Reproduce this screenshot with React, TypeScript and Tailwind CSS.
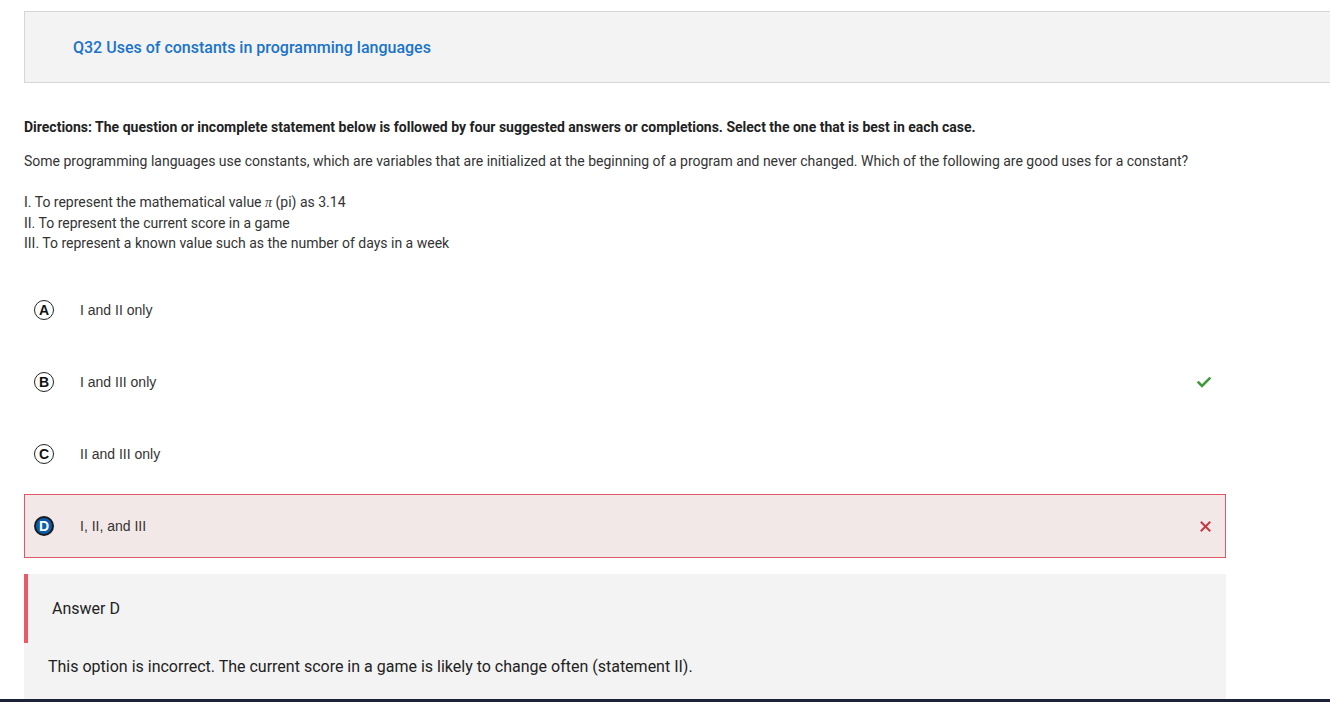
import React from 'react';

type Option = {
  letter: string;
  text: string;
  mark?: 'correct' | 'wrong';
  selected?: boolean;
};

const options: Option[] = [
  { letter: 'A', text: 'I and II only' },
  { letter: 'B', text: 'I and III only', mark: 'correct' },
  { letter: 'C', text: 'II and III only' },
  { letter: 'D', text: 'I, II, and III', mark: 'wrong', selected: true },
];

const CheckIcon = () => (
  <svg width="14" height="11" viewBox="0 0 14 11" fill="none">
    <path d="M1.5 5.5 L5 9 L12.5 1.5" stroke="#3f9b3a" strokeWidth="2.6" strokeLinecap="square" />
  </svg>
);

const CrossIcon = () => (
  <svg width="11" height="11" viewBox="0 0 11 11" fill="none">
    <path d="M1.5 1.5 L9.5 9.5 M9.5 1.5 L1.5 9.5" stroke="#c23a44" strokeWidth="2" strokeLinecap="square" />
  </svg>
);

const LetterBadge = ({ letter, selected }: { letter: string; selected?: boolean }) => (
  <div
    className={
      selected
        ? 'flex h-[20px] w-[20px] items-center justify-center rounded-full border-2 border-[#1b1b1b] bg-[#0b5cad] text-[14px] font-bold text-white'
        : 'flex h-[20px] w-[20px] items-center justify-center rounded-full border border-[#222] bg-white text-[14px] font-bold text-[#111]'
    }
    style={{ fontFamily: '"Liberation Sans", Arial, sans-serif' }}
  >
    {letter}
  </div>
);

export default function App() {
  return (
    <div
      className="flex h-[702px] flex-col overflow-hidden bg-white text-[#333]"
      style={{ fontFamily: 'Roboto, "Noto Sans", sans-serif' }}
    >
      <div className="flex-1 overflow-hidden">
        {/* Title bar */}
        <div className="ml-[24px] mt-[11px] flex h-[72px] w-[1330px] items-center border border-[#d6d6d6] bg-[#f3f3f3] pl-[48px] pt-[2px]">
          <h1 className="text-[16px] font-medium text-[#1a73c9]">Q32 Uses of constants in programming languages</h1>
        </div>

        <div className="pl-[24px] pr-[104px]">
          <p className="mt-[35px] text-[14px] leading-[18px] font-bold text-[#222]">
            Directions: The question or incomplete statement below is followed by four suggested answers or completions. Select the one that is best in each case.
          </p>
          <p className="mt-[16px] text-[14px] leading-[18px]">
            Some programming languages use constants, which are variables that are initialized at the beginning of a program and never changed. Which of the following are good uses for a constant?
          </p>
          <div className="mt-[22px] text-[14px] leading-[20px]">
            <div>
              I. To represent the mathematical value{' '}
              <span className="italic" style={{ fontFamily: '"Liberation Serif", serif' }}>
                π
              </span>{' '}
              (pi) as 3.14
            </div>
            <div>II. To represent the current score in a game</div>
            <div>III. To represent a known value such as the number of days in a week</div>
          </div>

          {/* Options */}
          <div className="mt-[25px] flex flex-col gap-[8px]">
            {options.map((opt) => (
              <div
                key={opt.letter}
                className={
                  opt.selected
                    ? 'flex h-[64px] items-center border border-[#e25766] bg-[#f3e8e8] pl-[9px] pr-[14px]'
                    : 'flex h-[64px] items-center border border-transparent pl-[9px] pr-[14px]'
                }
              >
                <LetterBadge letter={opt.letter} selected={opt.selected} />
                <span
                  className="ml-[26px] flex-1 text-[14px] text-[#333]"
                  style={{ fontFamily: '"Liberation Sans", Arial, sans-serif' }}
                >
                  {opt.text}
                </span>
                {opt.mark === 'correct' && <CheckIcon />}
                {opt.mark === 'wrong' && <CrossIcon />}
              </div>
            ))}
          </div>

          {/* Answer explanation */}
          <div className="mt-[16px] bg-[#f3f3f3] pb-[40px]">
            <div className="flex h-[69px] items-center border-l-4 border-[#e8596a] pl-[24px] text-[16px] text-[#222]">
              Answer D
            </div>
            <p className="mt-[14px] pl-[24px] text-[16px] leading-[20px] text-[#222]">
              This option is incorrect. The current score in a game is likely to change often (statement II).
            </p>
          </div>
        </div>
      </div>
      <div className="h-[3px] bg-[#1c2338]" />
    </div>
  );
}
